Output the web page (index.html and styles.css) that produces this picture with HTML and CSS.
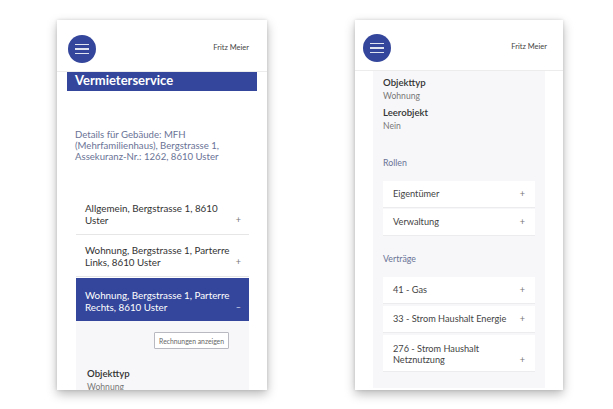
FILE: index.html
```html
<!DOCTYPE html>
<html>
<head>
  <meta charset="UTF-8">
  <title>Vermieterservice</title>
  <link rel="stylesheet" href="styles.css">
</head>
<body>
  <div class="phone phone-left">
    <div class="header">
      <button class="menu-btn"><span></span><span></span><span></span></button>
      <div class="user">Fritz Meier</div>
    </div>
    <div class="content">
      <div class="title-bar">Vermieterservice</div>
      <p class="details">Details für Gebäude: MFH (Mehrfamilienhaus), Bergstrasse 1, Assekuranz-Nr.: 1262, 8610 Uster</p>
      <div class="accordion">
        <div class="acc-item">
          <span class="acc-text">Allgemein, Bergstrasse 1, 8610 Uster</span>
          <span class="acc-sign">+</span>
        </div>
        <div class="acc-item">
          <span class="acc-text">Wohnung, Bergstrasse 1, Parterre Links, 8610 Uster</span>
          <span class="acc-sign">+</span>
        </div>
        <div class="acc-item open">
          <span class="acc-text">Wohnung, Bergstrasse 1, Parterre Rechts, 8610 Uster</span>
          <span class="acc-sign">–</span>
        </div>
        <div class="acc-body">
          <div class="btn-row"><button class="btn">Rechnungen anzeigen</button></div>
          <div class="field">
            <div class="field-label">Objekttyp</div>
            <div class="field-value">Wohnung</div>
          </div>
        </div>
      </div>
    </div>
  </div>

  <div class="phone phone-right">
    <div class="header">
      <button class="menu-btn"><span></span><span></span><span></span></button>
      <div class="user">Fritz Meier</div>
    </div>
    <div class="panel">
      <div class="field">
        <div class="field-label">Objekttyp</div>
        <div class="field-value">Wohnung</div>
      </div>
      <div class="field">
        <div class="field-label">Leerobjekt</div>
        <div class="field-value">Nein</div>
      </div>

      <div class="section-title">Rollen</div>
      <div class="card-list">
        <div class="card"><span>Eigentümer</span><span class="acc-sign">+</span></div>
        <div class="card"><span>Verwaltung</span><span class="acc-sign">+</span></div>
      </div>

      <div class="section-title next">Verträge</div>
      <div class="card-list spaced">
        <div class="card"><span>41 - Gas</span><span class="acc-sign">+</span></div>
        <div class="card"><span>33 - Strom Haushalt Energie</span><span class="acc-sign">+</span></div>
        <div class="card tall"><span>276 - Strom Haushalt<br>Netznutzung</span><span class="acc-sign">+</span></div>
      </div>
    </div>
  </div>
</body>
</html>
```

FILE: styles.css
```css
* { box-sizing: border-box; }
html, body {
  margin: 0; padding: 0;
  background: #fff;
  font-family: 'Lato', 'Open Sans', sans-serif;
  overflow: hidden;
}
body {
  display: flex;
  gap: 88px;
  padding: 20px 0 0 57px;
  height: 409px;
}
.phone {
  width: 210px;
  height: 370px;
  background: #fff;
  overflow: hidden;
  display: flex;
  flex-direction: column;
  box-shadow: 0 4px 10px rgba(0,0,0,0.28), 0 0 3px rgba(0,0,0,0.12);
}
.phone-right { width: 208px; }

.header {
  flex: 0 0 52px;
  display: flex;
  justify-content: space-between;
  align-items: flex-start;
  padding: 15px 18px 0 11px;
  border-bottom: 1px solid #ececec;
}
.phone-right .header { flex-basis: 51px; padding: 14px 16px 0 8px; }
.menu-btn {
  width: 28px; height: 28px;
  border-radius: 50%;
  border: none;
  background: #34469b;
  padding: 0;
  display: flex;
  flex-direction: column;
  justify-content: center;
  align-items: center;
  gap: 3px;
}
.menu-btn span {
  display: block;
  width: 14px; height: 1.5px;
  background: rgba(255,255,255,0.85);
}
.user {
  font-size: 7.5px;
  color: #444;
  margin-top: 8px;
}

.content { padding: 0 10px; }
.title-bar {
  background: #34469b;
  color: #fff;
  font-size: 13px;
  font-weight: 700;
  height: 19px;
  line-height: 17px;
  padding-left: 8px;
}
.details {
  margin: 38px 6px 0 8px;
  font-size: 9.6px;
  line-height: 11px;
  color: #6a7396;
}
.accordion { margin: 32px 8px 0 9px; }
.acc-item {
  display: flex;
  align-items: flex-end;
  justify-content: space-between;
  padding: 8px 8px 8px 9px;
  font-size: 9.8px;
  line-height: 12px;
  color: #333;
  border-bottom: 1px solid #e6e6e6;
}
.acc-item + .acc-item { margin-top: 1px; }
.acc-text { max-width: 152px; }
.acc-sign {
  font-size: 9px;
  color: #777;
  line-height: 12px;
}
.acc-item.open {
  background: #34469b;
  color: #fff;
  padding: 11px 8px 8px 9px;
  border-bottom: none;
}
.acc-item.open .acc-sign { color: rgba(255,255,255,0.8); }
.acc-body {
  background: #f7f7f9;
  padding: 11px 20px 10px 11px;
  height: 120px;
}
.btn-row { display: flex; justify-content: flex-end; }
.btn {
  font-family: inherit;
  font-size: 6.8px;
  color: #666;
  background: #fff;
  border: 1px solid #b9b9c2;
  border-radius: 1px;
  height: 17px;
  padding: 0 4px;
}
.acc-body .field { margin-top: 18px; }

.field-label {
  font-size: 9.6px;
  line-height: 14px;
  color: #333;
  font-weight: 600;
}
.field-value {
  font-size: 8.6px;
  line-height: 13px;
  color: #777;
}

.panel {
  flex: 1;
  margin: 0 18px 2px 18px;
  background: #f7f7f9;
  padding: 5px 10px 0 10px;
}
.panel .field + .field { margin-top: 3px; }
.section-title {
  font-size: 8.8px;
  color: #6a7396;
  margin: 24px 0 12px 0;
  line-height: 12px;
}
.section-title.next { margin-top: 17px; }
.card-list {
  display: flex;
  flex-direction: column;
  gap: 1px;
}
.card-list.spaced { gap: 2px; }
.card {
  background: #fff;
  display: flex;
  justify-content: space-between;
  align-items: flex-end;
  padding: 7px 10px 8px 10px;
  font-size: 9.2px;
  line-height: 11px;
  color: #444;
  min-height: 27px;
  border-bottom: 1px solid #ececef;
}
.card.tall { padding-top: 8px; padding-bottom: 6px; }
.card .acc-sign { line-height: 11px; }
```
